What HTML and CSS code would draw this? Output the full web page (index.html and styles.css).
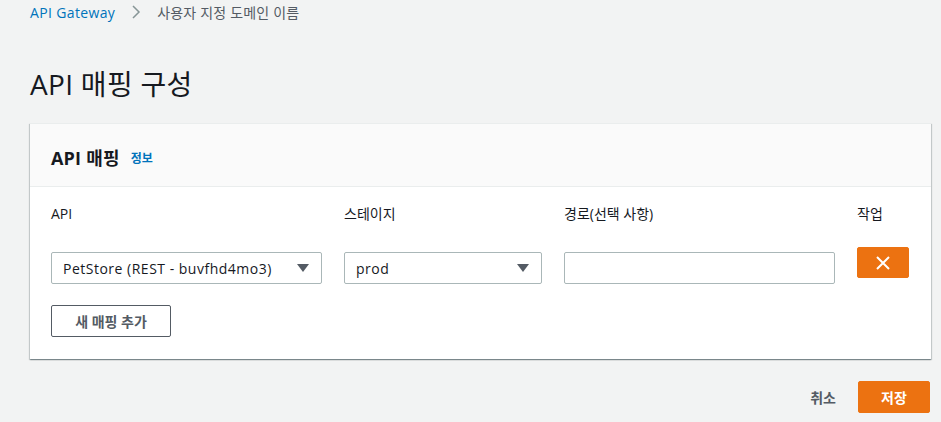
FILE: index.html
```html
<!DOCTYPE html>
<html lang="ko">
<head>
<meta charset="utf-8">
<link rel="stylesheet" href="styles.css">
</head>
<body>
<nav class="crumbs">
  <a class="crumb-link">API Gateway</a>
  <svg class="crumb-sep" width="10" height="16" viewBox="0 0 10 16"><path d="M2 2 L8 8 L2 14" fill="none" stroke="#879596" stroke-width="1.5"/></svg>
  <span class="crumb-current">사용자 지정 도메인 이름</span>
</nav>
<h1 class="title">API 매핑 구성</h1>
<section class="card">
  <header class="card-head">
    <h2>API 매핑</h2><a class="info">정보</a>
  </header>
  <div class="card-body">
    <div class="grid">
      <div class="label">API</div>
      <div class="label">스테이지</div>
      <div class="label">경로(선택 사항)</div>
      <div class="label">작업</div>
      <div class="select wide"><span>PetStore (REST - buvfhd4mo3)</span><i class="caret"></i></div>
      <div class="select"><span>prod</span><i class="caret"></i></div>
      <div class="input"></div>
      <button class="remove"><svg width="14" height="14" viewBox="0 0 14 14"><path d="M1 1 L13 13 M13 1 L1 13" stroke="#fff" stroke-width="2"/></svg></button>
    </div>
    <button class="add">새 매핑 추가</button>
  </div>
</section>
<div class="actions">
  <button class="cancel">취소</button>
  <button class="save">저장</button>
</div>
</body>
</html>
```
FILE: styles.css
```css
* { box-sizing: border-box; }
body {
  margin: 0;
  padding: 0 11px 0 30px;
  background: #f2f3f3;
  font-family: "Open Sans", "Noto Sans CJK KR", sans-serif;
  color: #16191f;
  font-size: 14px;
}
.crumbs {
  display: flex;
  align-items: center;
  height: 24px;
}
.crumb-link { color: #0073bb; font-size: 14px; letter-spacing: 0.35px; }
.crumb-sep { margin: 0 16px 0 16px; }
.crumb-current { color: #545b64; font-size: 14px; letter-spacing: 0.2px; }
.title {
  margin: 42px 0 0;
  font-size: 28px;
  font-weight: 400;
  line-height: 36px;
  letter-spacing: 0.3px;
}
.card {
  margin-top: 21px;
  margin-right: -1px;
  background: #fff;
  box-shadow: 0 1px 1px 0 rgba(0,28,36,.3), 1px 1px 1px 0 rgba(0,28,36,.15), -1px 1px 1px 0 rgba(0,28,36,.15);
  border-top: 1px solid #eaeded;
}
.card-head {
  background: #fafafa;
  border-bottom: 1px solid #eaeded;
  height: 63px;
  display: flex;
  align-items: center;
  padding: 4px 20px 0 21px;
}
.card-head h2 {
  margin: 0;
  font-size: 18px;
  font-weight: 700;
  letter-spacing: 0.2px;
}
.info {
  margin-left: 11px;
  font-size: 12px;
  font-weight: 700;
  color: #0073bb;
  padding-top: 2px;
}
.card-body {
  padding: 16px 20px 22px 21px;
}
.grid {
  display: grid;
  grid-template-columns: 271px 198px 271px 52px;
  column-gap: 22px;
  row-gap: 22px;
  align-items: start;
}
.label {
  font-size: 14px;
  line-height: 22px;
  color: #16191f;
}
.select, .input {
  height: 32px;
  border: 1px solid #aab7b8;
  border-radius: 2px;
  background: #fff;
  display: flex;
  align-items: center;
  justify-content: space-between;
  padding: 0 12px 0 11px;
  margin-top: 5px;
}
.select span { font-size: 14px; color: #16191f; letter-spacing: 0.5px; }
.caret {
  width: 0; height: 0;
  border-left: 6px solid transparent;
  border-right: 6px solid transparent;
  border-top: 8px solid #545b64;
}
.remove {
  width: 52px;
  height: 31px;
  background: #ec7211;
  border: 1px solid #ec7211;
  border-radius: 2px;
  display: flex;
  align-items: center;
  justify-content: center;
  padding: 0;
}
.add {
  margin-top: 21px;
  width: 120px;
  height: 32px;
  background: #fff;
  border: 1px solid #545b64;
  border-radius: 2px;
  font-family: inherit;
  font-size: 14px;
  font-weight: 700;
  color: #545b64;
}
.actions {
  display: flex;
  justify-content: flex-end;
  align-items: center;
  gap: 22px;
  margin-top: 22px;
}
.cancel {
  background: none;
  border: none;
  font-family: inherit;
  font-size: 14px;
  font-weight: 700;
  color: #545b64;
  padding: 0;
}
.save {
  width: 72px;
  height: 32px;
  background: #ec7211;
  border: 1px solid #ec7211;
  border-radius: 2px;
  color: #fff;
  font-family: inherit;
  font-size: 14px;
  font-weight: 700;
}
```
